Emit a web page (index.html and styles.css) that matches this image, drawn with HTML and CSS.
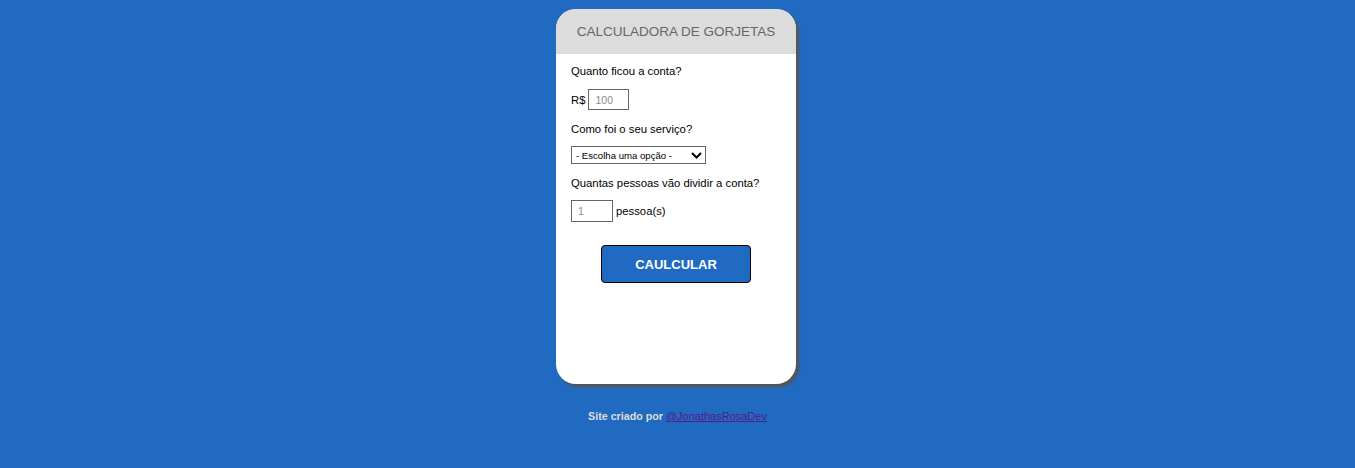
FILE: index.html
```html
<!DOCTYPE html>
<html lang="pt-BR">
<head>
<meta charset="utf-8">
<title>Calculadora de Gorjetas</title>
<link rel="stylesheet" href="styles.css">
</head>
<body>
<main class="card">
  <header class="card-header">
    <h1 class="title">CALCULADORA DE GORJETAS</h1>
  </header>
  <section class="card-body">
    <p class="label">Quanto ficou a conta?</p>
    <div class="row row-bill">
      <span class="prefix">R$</span>
      <input class="field field-bill" type="text" placeholder="100">
    </div>
    <p class="label label-gap">Como foi o seu serviço?</p>
    <div class="row row-select">
      <span class="select-wrap">
        <select class="choice">
          <option>- Escolha uma opção -</option>
        </select>
        <svg class="chevron" width="11" height="7" viewBox="0 0 11 7" aria-hidden="true">
          <path d="M1 1 L5.5 5.5 L10 1" fill="none" stroke="#000" stroke-width="2"/>
        </svg>
      </span>
    </div>
    <p class="label label-gap">Quantas pessoas vão dividir a conta?</p>
    <div class="row row-people">
      <input class="field field-people" type="text" placeholder="1">
      <span class="suffix">pessoa(s)</span>
    </div>
    <div class="actions">
      <button class="btn" type="button">CAULCULAR</button>
    </div>
  </section>
</main>
<footer class="footer">
  Site criado por <a class="footer-link" href="#">@JonathasRosaDev</a>
</footer>
</body>
</html>
```

FILE: styles.css
```css
* { box-sizing: border-box; }

body {
  margin: 0;
  background: #206bc1;
  font-family: "Liberation Sans", Arial, sans-serif;
  display: flex;
  flex-direction: column;
  align-items: center;
}

.card {
  margin-top: 9px;
  margin-right: 3px;
  width: 240px;
  height: 375px;
  background: #fff;
  border-radius: 20px;
  overflow: hidden;
  box-shadow: 3px 3px 3px #555;
}

.card-header {
  height: 45px;
  background: #dcdcdc;
  display: flex;
  align-items: center;
  justify-content: center;
}

.title {
  margin: 0;
  font-size: 13.5px;
  font-weight: normal;
  color: #666;
}

.card-body {
  padding: 10px 15px 0 15px;
  display: flex;
  flex-direction: column;
}

.label {
  margin: 0;
  font-size: 11.3px;
  line-height: 14px;
  color: #000;
}

.label-gap { margin-top: 12px; }

.row {
  display: flex;
  align-items: center;
  font-size: 11.3px;
  color: #000;
}

.row-bill { margin-top: 11px; gap: 3px; }
.row-select { margin-top: 10px; }
.row-people { margin-top: 10px; gap: 3px; }

.field {
  height: 21px;
  border: 1px solid #666;
  border-radius: 0;
  padding: 0 6px;
  font-family: "Liberation Sans", Arial, sans-serif;
  font-size: 10.5px;
  color: #333;
  background: #fff;
}

.field::placeholder { color: #8a8a8a; }

.field-bill { width: 41px; }
.field-people { width: 42px; height: 22px; }

.select-wrap {
  position: relative;
  display: inline-block;
  width: 135px;
  height: 18px;
}

.choice {
  -webkit-appearance: none;
  appearance: none;
  width: 135px;
  height: 18px;
  font-family: "Liberation Sans", Arial, sans-serif;
  font-size: 9.6px;
  color: #000;
  border: 1px solid #666;
  border-radius: 0;
  background: #fff;
  padding: 0 0 0 4px;
}

.chevron {
  position: absolute;
  right: 4px;
  top: 6px;
  pointer-events: none;
}

.actions {
  margin-top: 23px;
  display: flex;
  justify-content: center;
}

.btn {
  width: 150px;
  height: 38px;
  background: #206bc1;
  color: #fff;
  border: 1px solid #000;
  border-radius: 4px;
  font-family: "Liberation Sans", Arial, sans-serif;
  font-weight: bold;
  font-size: 13px;
}

.footer {
  margin-top: 26px;
  font-size: 10.7px;
  line-height: 13px;
  font-weight: bold;
  color: #dddddd;
}

.footer-link {
  font-weight: normal;
  font-size: 11px;
  color: #551a8b;
  text-decoration: underline;
}
```
